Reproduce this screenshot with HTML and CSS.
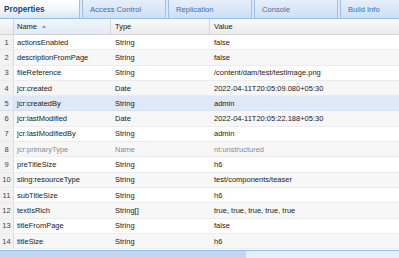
FILE: index.html
```html
<!DOCTYPE html>
<html>
<head>
<meta charset="utf-8">
<link rel="stylesheet" href="styles.css">
</head>
<body>
<div class="panel">
  <div class="tabs">
    <div class="tab active">Properties</div>
    <div class="tab">Access Control</div>
    <div class="tab">Replication</div>
    <div class="tab">Console</div>
    <div class="tab last">Build Info</div>
  </div>
  <div class="grid">
    <div class="row head">
      <div class="c num"></div>
      <div class="c name sorted">Name <span class="arrow"></span></div>
      <div class="c type">Type</div>
      <div class="c value">Value</div>
    </div>
    <div class="row"><div class="c num">1</div><div class="c name">actionsEnabled</div><div class="c type">String</div><div class="c value">false</div></div>
    <div class="row alt"><div class="c num">2</div><div class="c name">descriptionFromPage</div><div class="c type">String</div><div class="c value">false</div></div>
    <div class="row"><div class="c num">3</div><div class="c name">fileReference</div><div class="c type">String</div><div class="c value">/content/dam/test/testimage.png</div></div>
    <div class="row alt"><div class="c num">4</div><div class="c name">jcr:created</div><div class="c type">Date</div><div class="c value">2022-04-11T20:05:09.080+05:30</div></div>
    <div class="row sel"><div class="c num">5</div><div class="c name">jcr:createdBy</div><div class="c type">String</div><div class="c value">admin</div></div>
    <div class="row alt"><div class="c num">6</div><div class="c name">jcr:lastModified</div><div class="c type">Date</div><div class="c value">2022-04-11T20:05:22.188+05:30</div></div>
    <div class="row"><div class="c num">7</div><div class="c name">jcr:lastModifiedBy</div><div class="c type">String</div><div class="c value">admin</div></div>
    <div class="row alt prot"><div class="c num">8</div><div class="c name">jcr:primaryType</div><div class="c type">Name</div><div class="c value">nt:unstructured</div></div>
    <div class="row"><div class="c num">9</div><div class="c name">preTitleSize</div><div class="c type">String</div><div class="c value">h6</div></div>
    <div class="row alt"><div class="c num">10</div><div class="c name">sling:resourceType</div><div class="c type">String</div><div class="c value">test/components/teaser</div></div>
    <div class="row"><div class="c num">11</div><div class="c name">subTitleSize</div><div class="c type">String</div><div class="c value">h6</div></div>
    <div class="row alt"><div class="c num">12</div><div class="c name">textIsRich</div><div class="c type">String[]</div><div class="c value">true, true, true, true, true</div></div>
    <div class="row"><div class="c num">13</div><div class="c name">titleFromPage</div><div class="c type">String</div><div class="c value">false</div></div>
    <div class="row alt"><div class="c num">14</div><div class="c name">titleSize</div><div class="c type">String</div><div class="c value">h6</div></div>
  </div>
  <div class="scroll"><div class="thumb"></div></div>
</div>
</body>
</html>
```
FILE: styles.css
```css
html, body {
  margin: 0;
  padding: 0;
  background: #ffffff;
}
body {
  width: 399px;
  height: 258px;
  overflow: hidden;
  font-family: "Liberation Sans", Arial, sans-serif;
  font-size: 7.5px;
  color: #1a1a1a;
}
.panel {
  display: flex;
  flex-direction: column;
  height: 258px;
}
.tabs {
  display: flex;
  gap: 2px;
  height: 19px;
  flex: none;
  background: #dce8f7;
  border-bottom: 1px solid #99bbe8;
  box-sizing: border-box;
}
.tab {
  width: 84px;
  flex: none;
  box-sizing: border-box;
  padding-left: 7px;
  display: flex;
  align-items: center;
  border: 1px solid #9fbfe6;
  border-top: none;
  border-bottom: none;
  background: linear-gradient(#e6effa, #cfdff4);
  color: #3f6ca8;
  font-size: 7.6px;
}
.tab.active {
  width: 80px;
  padding-left: 4px;
  border-left: none;
  background: linear-gradient(#ffffff 0%, #f3f7fc 50%, #d9e6f6 100%);
  color: #15428b;
  font-weight: bold;
  font-size: 8.2px;
}
.tab.last {
  flex: 1;
  border-right: none;
}
.grid {
  flex: none;
  display: flex;
  flex-direction: column;
}
.row {
  display: grid;
  grid-template-columns: 14px 97px 99px 1fr;
  height: 15.3px;
  box-sizing: border-box;
  border-bottom: 1px solid #ececec;
  background: #ffffff;
}
.row.alt {
  background: #f7f7f7;
}
.row.sel {
  background: #dfe8f6;
  border-bottom-color: #d6e1f1;
}
.row.prot {
  color: #8a8a8a;
}
.row.prot .num {
  color: #444;
}
.row.head {
  height: 16px;
  background: linear-gradient(#fafafa, #ebebeb);
  border-bottom: 1px solid #d3d3d3;
  color: #222;
}
.c {
  display: flex;
  align-items: center;
  padding-left: 3px;
  white-space: nowrap;
  overflow: hidden;
}
.num {
  padding-left: 0;
  justify-content: center;
  color: #444;
  background: #f2f2f2;
  border-right: 1px solid #dcdcdc;
  box-sizing: border-box;
}
.row.sel .num {
  background: #e8eef8;
}
.head .num {
  background: transparent;
}
.head .c {
  border-right: 1px solid #d6d6d6;
}
.head .value {
  border-right: none;
}
.head .sorted {
  background: linear-gradient(#f2f6fb, #e3eaf3);
}
.type, .value {
  padding-left: 4px;
}
.head .type, .head .value {
  padding-left: 4px;
}
.arrow {
  display: inline-block;
  width: 0;
  height: 0;
  margin-left: 5px;
  border-left: 2.5px solid transparent;
  border-right: 2.5px solid transparent;
  border-bottom: 3px solid #7d9cc4;
}
.scroll {
  flex: 1;
  border-top: 1px solid #99bbe8;
  background: #e6eef9;
  display: flex;
  margin-top: 1px;
}
.thumb {
  width: 246px;
  background: #c5d7ee;
}
```
